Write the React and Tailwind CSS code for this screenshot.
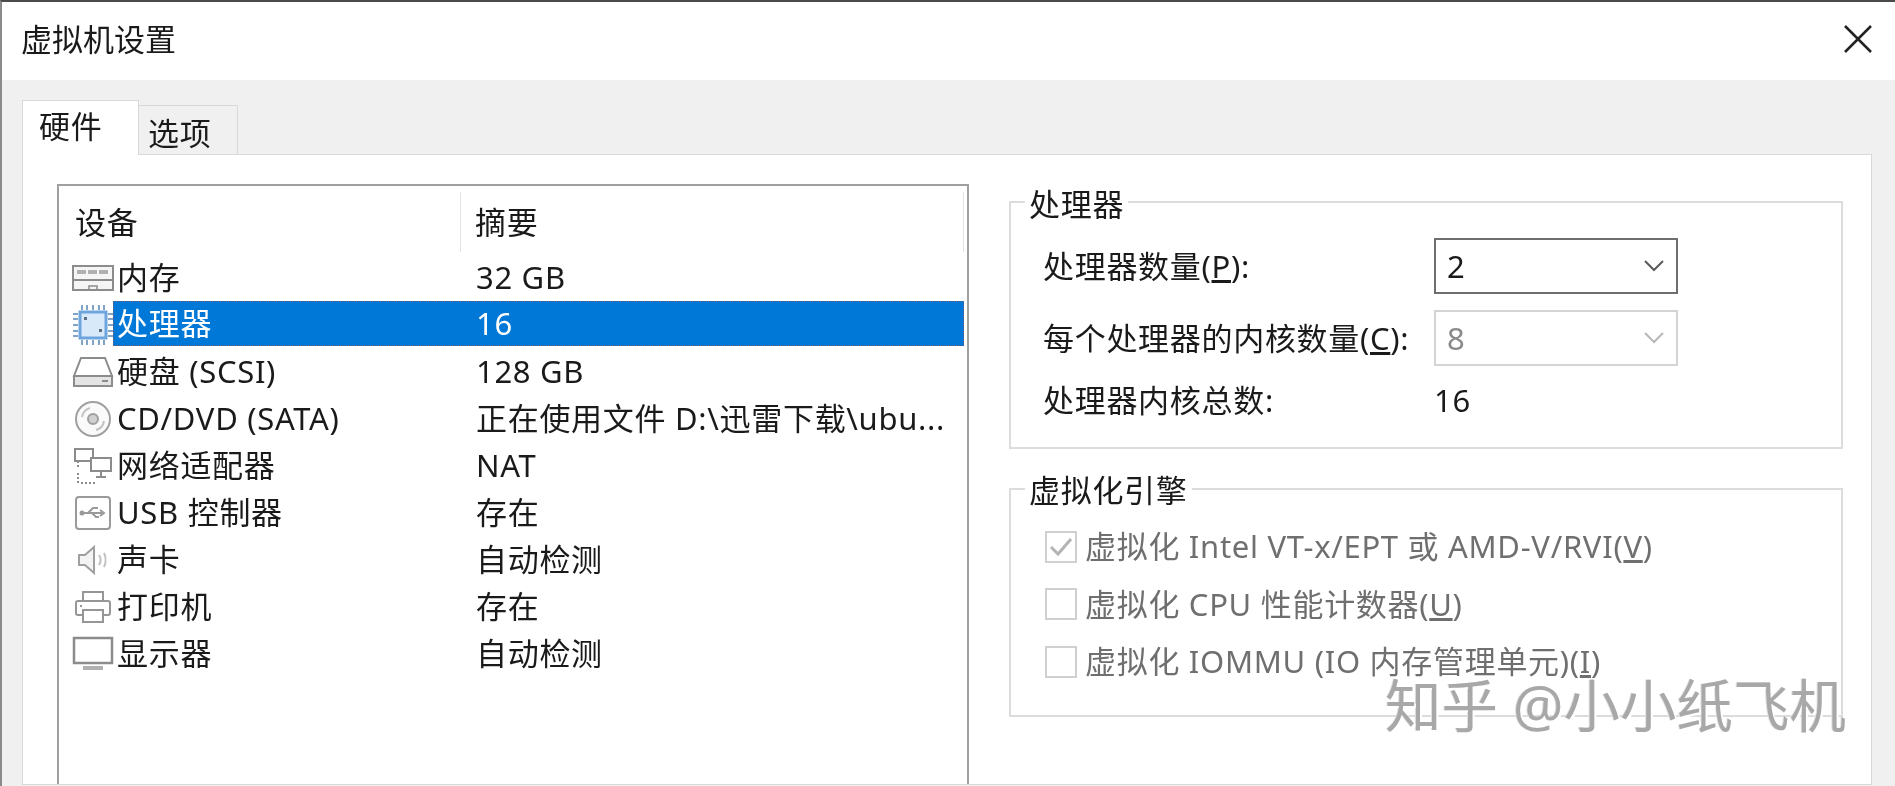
import React from "react";

const stroke = "#8c8c8c";

function MemoryIcon() {
  return (
    <svg width="42" height="26" viewBox="0 0 42 26" fill="none" stroke={stroke} strokeWidth="2">
      <rect x="1" y="1" width="40" height="24" fill="#f5f5f5" />
      <path d="M5 7h9M16 7h9M27 7h9" strokeWidth="4" stroke="#b0b0b0" />
      <path d="M1 15h40" />
      <path d="M17 25v-4h8v4" strokeWidth="1.5" />
    </svg>
  );
}

function CpuIcon() {
  return (
    <svg width="42" height="42" viewBox="0 0 42 42" fill="none">
      <rect x="8" y="8" width="26" height="26" fill="#d8e9fa" stroke="#6da5dc" strokeWidth="3" />
      <rect x="12" y="13" width="3" height="3" fill="#5c6f85" />
      <rect x="27" y="25" width="3" height="3" fill="#5c6f85" />
      <path d="M10 1v5M15 1v5M21 1v5M27 1v5M32 1v5M10 36v5M15 36v5M21 36v5M27 36v5M32 36v5M1 10h5M1 15h5M1 21h5M1 27h5M1 32h5M36 10h5M36 15h5M36 21h5M36 27h5M36 32h5" stroke="#7fa4c8" strokeWidth="2" />
    </svg>
  );
}

function DiskIcon() {
  return (
    <svg width="42" height="32" viewBox="0 0 42 32" fill="none" stroke={stroke} strokeWidth="2">
      <path d="M9 2h24l7 18H2z" fill="#fff" />
      <rect x="2" y="20" width="38" height="10" fill="#e4e4e4" />
      <path d="M30 25h6" />
    </svg>
  );
}

function CdIcon() {
  return (
    <svg width="38" height="38" viewBox="0 0 38 38" fill="none" stroke="#a0a0a0" strokeWidth="2">
      <circle cx="19" cy="19" r="17" fill="#fafafa" />
      <circle cx="19" cy="19" r="5" fill="#d0d0d0" />
      <path d="M8 17a11 11 0 0 1 8-9M30 21a11 11 0 0 1-8 9" stroke="#c4c4c4" />
    </svg>
  );
}

function NetworkIcon() {
  return (
    <svg width="40" height="38" viewBox="0 0 40 38" fill="none" stroke={stroke} strokeWidth="2">
      <rect x="2" y="2" width="18" height="12" fill="#fff" />
      <rect x="18" y="11" width="20" height="13" fill="#fff" />
      <path d="M28 24v5M23 30h10" />
      <path d="M5 14v8M5 26v10M8 36h14" strokeDasharray="2 2" />
    </svg>
  );
}

function UsbIcon() {
  return (
    <svg width="38" height="36" viewBox="0 0 38 36" fill="none" stroke="#9a9a9a" strokeWidth="2">
      <rect x="2" y="2" width="34" height="32" rx="3" />
      <path d="M8 18h20M14 18l5-5h5M18 18l4 4h3" />
      <circle cx="8" cy="18" r="1.5" fill="#9a9a9a" />
      <path d="M26 15l4 3-4 3" />
    </svg>
  );
}

function SpeakerIcon() {
  return (
    <svg width="32" height="30" viewBox="0 0 32 30" fill="none" stroke="#a0a0a0" strokeWidth="2">
      <path d="M2 10h6l9-8v26l-9-8H2z" fill="#f4f4f4" />
      <path d="M22 10c2 3 2 7 0 10M27 8c2 4 2 10 0 14" stroke="#c0c0c0" />
    </svg>
  );
}

function PrinterIcon() {
  return (
    <svg width="38" height="34" viewBox="0 0 38 34" fill="none" stroke="#969696" strokeWidth="2">
      <path d="M9 11V2h20v9" />
      <rect x="2" y="11" width="34" height="14" rx="2" />
      <rect x="9" y="20" width="20" height="12" fill="#fff" />
      <path d="M6 16h2" />
    </svg>
  );
}

function MonitorIcon() {
  return (
    <svg width="42" height="36" viewBox="0 0 42 36" fill="none" stroke={stroke} strokeWidth="2.5">
      <rect x="2" y="2" width="38" height="25" fill="#fff" />
      <path d="M11 32h20" strokeWidth="4" stroke="#b0b0b0" />
    </svg>
  );
}

const devices = [
  { name: "内存", summary: "32 GB", icon: <MemoryIcon /> },
  { name: "处理器", summary: "16", icon: <CpuIcon />, selected: true },
  { name: "硬盘 (SCSI)", summary: "128 GB", icon: <DiskIcon /> },
  { name: "CD/DVD (SATA)", summary: "正在使用文件 D:\\迅雷下载\\ubu...", icon: <CdIcon /> },
  { name: "网络适配器", summary: "NAT", icon: <NetworkIcon /> },
  { name: "USB 控制器", summary: "存在", icon: <UsbIcon /> },
  { name: "声卡", summary: "自动检测", icon: <SpeakerIcon /> },
  { name: "打印机", summary: "存在", icon: <PrinterIcon /> },
  { name: "显示器", summary: "自动检测", icon: <MonitorIcon /> },
];

function DeviceRow({ device }) {
  return (
    <div className="flex items-center h-[47.05px]">
      <div className="w-[58px] flex justify-center items-center shrink-0 pl-[9px]">{device.icon}</div>
      {device.selected ? (
        <div className="flex-1 flex items-center h-[45px] bg-[#0078d7] text-white border border-dotted border-[#6a5a7a] -ml-[4px] mr-[3px] pl-[3px] -translate-y-[1px]">
          <span className="w-[359px]">{device.name}</span>
          <span>{device.summary}</span>
        </div>
      ) : (
        <div className="flex-1 flex items-center">
          <span className="w-[359px]">{device.name}</span>
          <span>{device.summary}</span>
        </div>
      )}
    </div>
  );
}

function Combo({ value, disabled }) {
  return (
    <div
      className={`w-[244px] h-[56px] flex items-center justify-between pl-[11px] pr-[12px] border-2 ${
        disabled ? "border-[#d4d4d4] text-[#8a8a8a]" : "border-[#6e6e6e]"
      }`}
    >
      <span>{value}</span>
      <svg width="20" height="12" viewBox="0 0 20 12" fill="none" stroke={disabled ? "#b8b8b8" : "#5a5a5a"} strokeWidth="2">
        <path d="M1 1l9 9 9-9" />
      </svg>
    </div>
  );
}

function CheckRow({ checked, children }) {
  return (
    <div className="flex items-center gap-[8px] h-[57.5px] text-[#6f6f6f]">
      <div className="w-[32px] h-[32px] border-2 border-[#d0d0d0] flex items-center justify-center shrink-0">
        {checked && (
          <svg width="24" height="20" viewBox="0 0 24 20" fill="none" stroke="#b4b4b4" strokeWidth="3">
            <path d="M2 10l7 7L22 2" />
          </svg>
        )}
      </div>
      <span>{children}</span>
    </div>
  );
}

export default function App() {
  return (
    <div className="w-[1895px] h-[786px] overflow-hidden relative bg-white text-[#1a1a1a] text-[31px] tracking-[0.7px] font-['Noto_Sans','Noto_Sans_CJK_SC',sans-serif] leading-none blur-[0.4px]">
      <div className="h-[80px] flex items-center justify-between border-t-2 border-t-[#4a4a4a] border-l-2 border-l-[#8a8a8a] pl-[19px] pr-[22px] pb-[4px]">
        <span className="text-[31px] tracking-normal">虚拟机设置</span>
        <svg width="30" height="30" viewBox="0 0 30 30" fill="none" stroke="#222" strokeWidth="2.5">
          <path d="M2 2l26 26M28 2L2 28" />
        </svg>
      </div>

      <div className="h-[706px] bg-[#f0f0f0] pt-[20px] pl-[20px] pr-[23px] flex flex-col border-l-2 border-l-[#8a8a8a]">
        <div className="flex items-end h-[55px] -mb-[1px] relative">
          <div className="w-[117px] h-[55px] bg-white border border-b-0 border-[#d9d9d9] flex items-center pl-[16px] pb-[3px]">硬件</div>
          <div className="w-[99px] h-[50px] bg-[#f0f0f0] border border-l-0 border-[#d9d9d9] flex items-center pl-[9px] pt-[6px]">选项</div>
        </div>

        <div className="h-[631px] bg-white border border-[#d9d9d9] pt-[29px] pl-[34px] flex gap-[40px] overflow-hidden">
          <div className="w-[912px] h-[640px] shrink-0 border-2 border-[#a0a0a0] border-b-0 flex flex-col">
            <div className="h-[68px] flex items-center shrink-0 pt-[6px] pb-[2px]">
              <div className="w-[402px] h-full flex items-center pl-[16px] border-r border-[#e4e4e4]">设备</div>
              <div className="flex-1 h-full flex items-center pl-[14px] border-r border-[#e4e4e4] mr-[3px]">摘要</div>
            </div>
            {devices.map((d) => (
              <DeviceRow key={d.name} device={d} />
            ))}
          </div>

          <div className="w-[834px] shrink-0 flex flex-col gap-[22px]">
            <fieldset className="h-[265px] border-2 border-[#dcdcdc] pl-[32px]">
              <legend className="-ml-[18px] px-[4px] h-[36px] flex items-center pt-[4px]">处理器</legend>
              <div className="flex items-center mt-[18px]">
                <span className="w-[391px]">处理器数量(<u>P</u>):</span>
                <Combo value="2" />
              </div>
              <div className="flex items-center mt-[16px]">
                <span className="w-[391px]">每个处理器的内核数量(<u>C</u>):</span>
                <Combo value="8" disabled />
              </div>
              <div className="flex items-center mt-[19px]">
                <span className="w-[391px]">处理器内核总数:</span>
                <span>16</span>
              </div>
            </fieldset>

            <fieldset className="h-[246px] border-2 border-[#dcdcdc] pl-[34px]">
              <legend className="-ml-[20px] px-[4px] h-[36px] flex items-center pt-[3px]">虚拟化引擎</legend>
              <div className="mt-[11px]">
                <CheckRow checked>虚拟化 Intel VT-x/EPT 或 AMD-V/RVI(<u>V</u>)</CheckRow>
                <CheckRow>虚拟化 CPU 性能计数器(<u>U</u>)</CheckRow>
                <CheckRow>虚拟化 IOMMU (IO 内存管理单元)(<u>I</u>)</CheckRow>
              </div>
            </fieldset>
          </div>
        </div>
      </div>

      {/* zhihu watermark sits over the dialog */}
      <div className="absolute left-[1385px] top-[678px] text-[56.5px] tracking-normal text-[#a8a8a8] whitespace-nowrap [text-shadow:2px_2px_0_#ffffff,-1px_0_0_#e0e0e0]">
        知乎 @小小纸飞机
      </div>
    </div>
  );
}
